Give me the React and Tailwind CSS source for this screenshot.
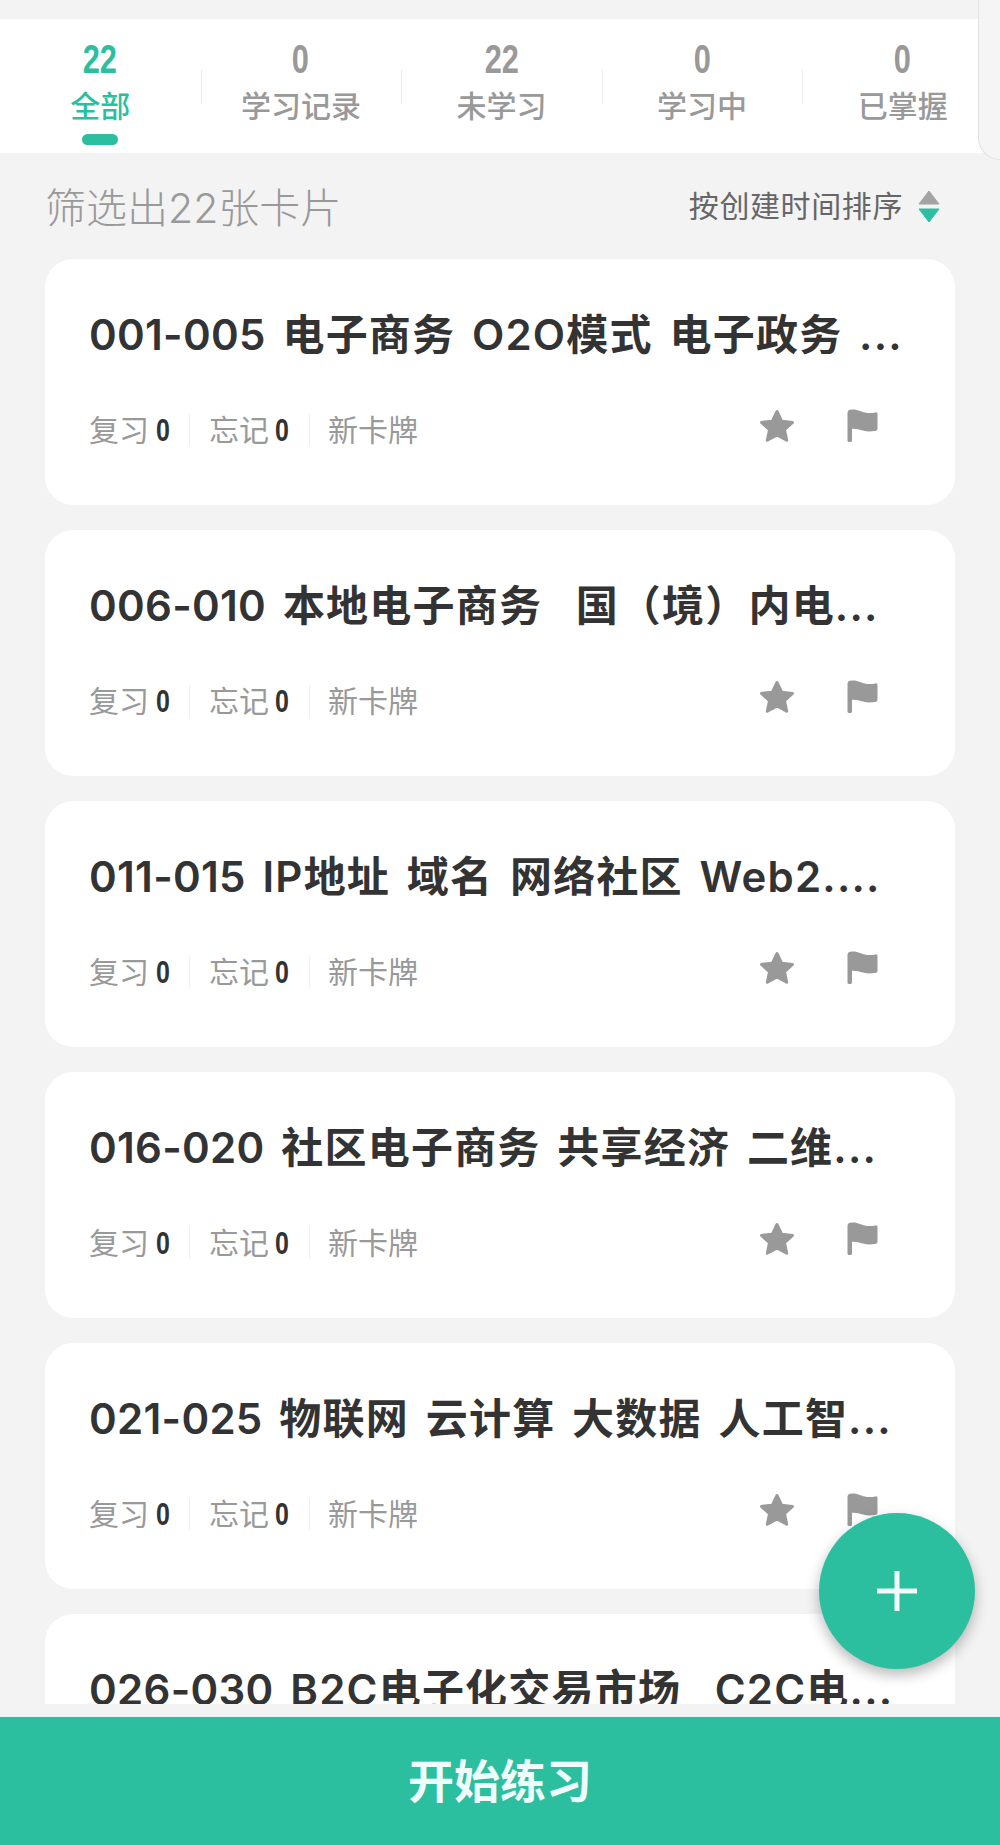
const tabs = [
  { count: '22', label: '全部', active: true },
  { count: '0', label: '学习记录' },
  { count: '22', label: '未学习' },
  { count: '0', label: '学习中' },
  { count: '0', label: '已掌握' },
]

const cards = [
  { code: '001-005', title: ' 电子商务 O2O模式 电子政务 ...' },
  { code: '006-010', title: ' 本地电子商务  国（境）内电...' },
  { code: '011-015', title: ' IP地址 域名 网络社区 Web2....' },
  { code: '016-020', title: ' 社区电子商务 共享经济 二维...' },
  { code: '021-025', title: ' 物联网 云计算 大数据 人工智...' },
  { code: '026-030', title: ' B2C电子化交易市场  C2C电...' },
]

function StarIcon() {
  return (
    <svg width="36" height="34" viewBox="0 0 36 34" className="text-[#999999]">
      <path
        d="M18 2.5 L22.6 12.2 L33.5 13.4 L25.5 20.7 L27.7 31.3 L18 26 L8.3 31.3 L10.5 20.7 L2.5 13.4 L13.4 12.2 Z"
        fill="currentColor"
        stroke="currentColor"
        strokeWidth="3"
        strokeLinejoin="round"
      />
    </svg>
  )
}

function FlagIcon() {
  return (
    <svg width="31" height="34" viewBox="0 0 31 34" className="text-[#999999]">
      <path
        d="M0.5 4 C0.5 1.5 2 0.5 5 0.5 C11 0.5 14 2.5 18 3.6 C22 4.6 25 3.8 28.5 3.4 C30 3.2 30.5 4 30.5 5.5 L30.5 19.5 C30.5 21 29.8 21.8 28 22 C24 22.6 20 22.8 16 21.6 C12 20.4 9 19.4 5 19.8 L5 31.5 C5 33.5 0.5 33.5 0.5 31.5 Z"
        fill="currentColor"
      />
    </svg>
  )
}

function Zero({ className }) {
  return (
    <span className={`${className} font-['Liberation_Sans',sans-serif] text-[32px] font-bold text-[#333333]`}>
      <span className="inline-block origin-left scale-x-[0.78]">0</span>
    </span>
  )
}

function Card({ code, title }) {
  return (
    <div className="shrink-0 h-[246px] rounded-[28px] bg-white pt-[50px] pl-[44px]">
      <div className="h-[52px] leading-[52px] text-[42px] font-semibold tracking-[1.2px] [word-spacing:5px] text-[#333333] whitespace-pre">
        <span className="tracking-[0.3px]">{code}</span>
        {title}
      </div>
      <div className="mt-[48px] mr-[77px] flex items-center justify-between">
        <div className="flex items-center h-[40px] text-[30px] text-[#999999]">
          <span className="w-[67px]">复习</span>
          <Zero className="w-[33px]" />
          <span className="w-px h-[32px] bg-[#eeeeee]" />
          <span className="ml-[19px] w-[66px]">忘记</span>
          <Zero className="w-[34px]" />
          <span className="w-px h-[32px] bg-[#eeeeee]" />
          <span className="ml-[18px]">新卡牌</span>
        </div>
        <div className="flex items-center mb-[8px] gap-[52px]">
          <StarIcon />
          <FlagIcon />
        </div>
      </div>
    </div>
  )
}

export default function App() {
  return (
    <div className="relative h-[1845px] w-[1000px] overflow-hidden flex flex-col bg-[#f3f3f3] font-['Inter','Noto_Sans_CJK_SC',sans-serif]">
      {/* tab bar */}
      <div className="mt-[19px] h-[134px] shrink-0 flex bg-white">
        {tabs.map((t, i) => (
          <div key={i} className="relative shrink-0 w-[200.6px] flex flex-col items-center">
            {i > 0 && <span className="absolute left-0 top-[50px] w-px h-[35px] bg-[#eeeeee]" />}
            <div
              className={`mt-[18px] h-[44px] leading-[44px] text-[41px] font-bold font-['Liberation_Sans',sans-serif] scale-x-75 ${
                t.active ? 'text-[#2bbf9f]' : 'text-[#999999]'
              }`}
            >
              {t.count}
            </div>
            <div
              className={`mt-[4px] h-[42px] leading-[42px] text-[30px] font-medium ${
                t.active ? 'text-[#2bbf9f]' : 'text-[#999999]'
              }`}
            >
              {t.label}
            </div>
            {t.active && <span className="mt-[7px] w-[36px] h-[11px] rounded-full bg-[#2bbf9f]" />}
          </div>
        ))}
      </div>

      {/* filter row */}
      <div className="h-[106px] shrink-0 flex items-start justify-between pl-[45px] pr-[60px] pt-[28px]">
        <span className="mt-[2px] text-[41px] leading-[50px] font-light text-[#999999]">筛选出22张卡片</span>
        <div className="flex items-center h-[50px] gap-[15px]">
          <span className="text-[30px] leading-[40px] tracking-[0.6px] text-[#666666]">按创建时间排序</span>
          <div className="flex flex-col gap-[3px]">
            <svg width="22" height="15" viewBox="0 0 22 15">
              <path d="M11 1 L21 14 L1 14 Z" fill="#a3a3a3" stroke="#a3a3a3" strokeLinejoin="round" />
            </svg>
            <svg width="22" height="15" viewBox="0 0 22 15">
              <path d="M1 1 L21 1 L11 14 Z" fill="#2bbf9f" stroke="#2bbf9f" strokeLinejoin="round" />
            </svg>
          </div>
        </div>
      </div>

      {/* list */}
      <div className="h-[1445px] shrink-0 overflow-hidden flex flex-col gap-[25px] px-[45px]">
        {cards.map((c, i) => (
          <Card key={i} code={c.code} title={c.title} />
        ))}
      </div>

      {/* start button */}
      <div className="mt-[12px] h-px shrink-0 bg-[#dff6f1]" />
      <div className="flex-1 flex items-center justify-center bg-[#2bbf9f] text-[46px] font-bold text-[#effcf9]">
        开始练习
      </div>

      {/* add button */}
      <button className="absolute left-[819px] top-[1513px] w-[156px] h-[156px] rounded-full bg-[#2bbf9f] shadow-[0_6px_14px_rgba(0,0,0,0.28)] flex items-center justify-center">
        <svg width="40" height="40" viewBox="0 0 40 40">
          <path d="M17.5 0 H22.5 V17.5 H40 V22.5 H22.5 V40 H17.5 V22.5 H0 V17.5 H17.5 Z" fill="#f0fdfa" />
        </svg>
      </button>

      {/* edge of the panel behind */}
      <div className="absolute right-0 top-0 w-[22px] h-[160px] rounded-bl-[26px] border-l border-b border-[#e2e2e2] bg-[#f5f5f5]" />
    </div>
  )
}
